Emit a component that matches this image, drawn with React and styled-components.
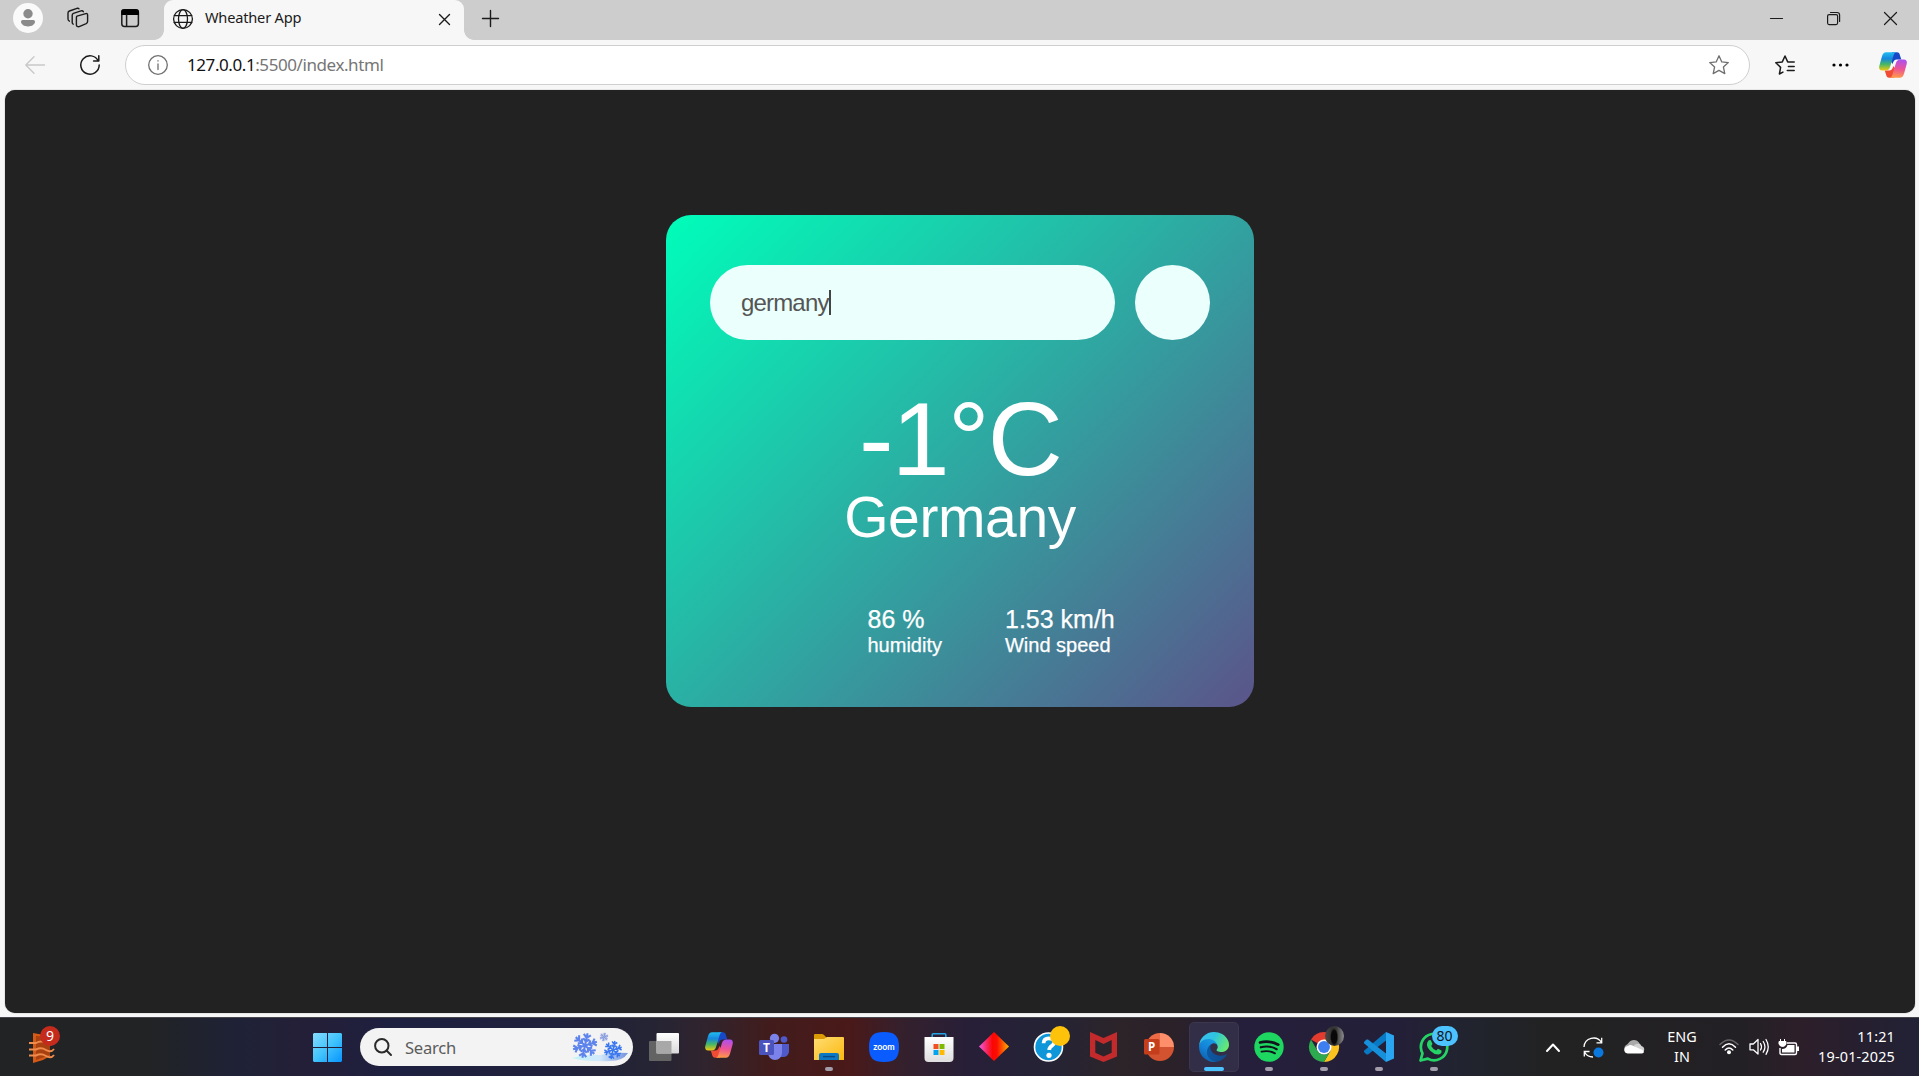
import React from "react";
import styled, { createGlobalStyle } from "styled-components";

const GlobalStyle = createGlobalStyle`
  * { box-sizing: border-box; }
  html, body { margin: 0; padding: 0; overflow: hidden; }
  svg { display: block; flex: none; overflow: visible; }
`;

const uiFont = `"Noto Sans", "Open Sans", sans-serif`;

const Screen = styled.div`
  display: flex;
  flex-direction: column;
  width: 1919px;
  height: 1076px;
  background: #f7f7f7;
  font-family: ${uiFont};
`;

/* ---------- browser chrome ---------- */

const TabStrip = styled.header`
  display: flex;
  height: 40px;
  background: #cdcdcd;
`;

const StripTools = styled.div`
  display: flex;
  align-items: center;
  width: 164px;
  height: 36px;
  padding-left: 13px;
`;

const Avatar = styled.div`
  display: flex;
  width: 30px;
  height: 30px;
  margin-right: 24px;
  border-radius: 50%;
  background: #fafafa;
`;

const StripIcon = styled.div`
  display: flex;
  margin-right: ${(p) => p.$gap || 0}px;
`;

const Tab = styled.div`
  position: relative;
  display: flex;
  align-items: center;
  width: 300px;
  height: 40px;
  padding: 0 14px 2px 9px;
  background: #f7f7f7;
  border-radius: 9px 9px 0 0;
  &::before,
  &::after {
    content: "";
    position: absolute;
    bottom: 0;
    width: 10px;
    height: 10px;
  }
  &::before {
    left: -10px;
    background: radial-gradient(circle at 0 0, #cdcdcd 9.5px, #f7f7f7 10.2px);
  }
  &::after {
    right: -10px;
    background: radial-gradient(circle at 100% 0, #cdcdcd 9.5px, #f7f7f7 10.2px);
  }
`;

const TabTitle = styled.span`
  flex: 1;
  margin-left: 12px;
  padding-bottom: 4px;
  font-size: 14.6px;
  line-height: 20px;
  letter-spacing: -0.2px;
  white-space: nowrap;
  color: #1b1b1b;
`;

const NewTab = styled.div`
  display: flex;
  align-items: center;
  height: 36px;
  margin-left: 18px;
`;

const WindowControls = styled.div`
  display: flex;
  align-items: center;
  gap: 44px;
  height: 36px;
  margin-left: auto;
  padding-right: 22px;
`;

const Toolbar = styled.div`
  display: flex;
  align-items: center;
  height: 50px;
  padding-left: 25px;
`;

const NavButton = styled.div`
  display: flex;
  margin-right: ${(p) => p.$gap || 0}px;
`;

const AddressBar = styled.div`
  display: flex;
  align-items: center;
  width: 1625px;
  height: 40px;
  padding: 0 20px 0 22px;
  background: #fff;
  border: 1px solid #cfcfcf;
  border-radius: 20px;
`;

const Url = styled.span`
  flex: 1;
  margin-left: 19px;
  padding-bottom: 1px;
  font-size: 17px;
  line-height: 24px;
  letter-spacing: -0.42px;
  color: #767676;
  b {
    font-weight: 400;
    color: #111;
  }
`;

const ToolbarActions = styled.div`
  display: flex;
  align-items: center;
  margin-left: 25px;
  svg:nth-child(2) { margin: 0 30px 0 37px; }
`;

const Viewport = styled.main`
  display: flex;
  justify-content: center;
  align-items: flex-start;
  height: 923px;
  margin: 0 4px 4px 5px;
  padding-top: 125px;
  background: #222;
  border-radius: 10px;
  box-shadow: 0 0 1px #555;
`;

/* ---------- weather card ---------- */

const Card = styled.section`
  display: flex;
  flex-direction: column;
  width: 588px;
  height: 492px;
  padding: 50px 44px;
  border-radius: 25px;
  background: linear-gradient(135deg, #00feba, #5b548a);
  color: #fff;
  font-family: "Liberation Sans", Arial, sans-serif;
  text-align: center;
`;

const SearchRow = styled.div`
  display: flex;
  justify-content: space-between;
`;

const Field = styled.div`
  display: flex;
  align-items: center;
  width: 405px;
  height: 75px;
  padding: 0 31px;
  border-radius: 38px;
  background: #ebfffc;
  color: #555;
  font-size: 24px;
  letter-spacing: -0.83px;
`;

const Caret = styled.i`
  width: 2px;
  height: 25px;
  background: #444;
`;

const RoundButton = styled.div`
  width: 75px;
  height: 75px;
  border-radius: 50%;
  background: #ebfffc;
`;

const Temperature = styled.div`
  margin-top: 43px;
  font-size: 104px;
  line-height: 113px;
  letter-spacing: -1.8px;
`;

const City = styled.div`
  margin-top: -11px;
  font-size: 57px;
  line-height: 65px;
  letter-spacing: -0.4px;
`;

const Details = styled.div`
  display: flex;
  gap: 63px;
  margin-top: 55px;
  padding-left: 157.5px;
  text-align: left;
  -webkit-text-stroke: 0.25px #fff;
`;

const Metric = styled.div`
  font-size: 20px;
  line-height: 23px;
  white-space: nowrap;
`;

const MetricValue = styled.div`
  font-size: 25px;
  line-height: 29px;
`;

/* ---------- taskbar ---------- */

const Taskbar = styled.footer`
  display: flex;
  align-items: center;
  height: 59px;
  border-top: 1px solid #46464c;
  background: linear-gradient(
    90deg,
    #212325 0, #212325 150px, #1f2237 240px, #241f38 310px, #1d2040 400px, #20213b 560px,
    #252434 650px, #30242e 705px, #421c1c 770px, #4a1919 850px, #35202c 900px, #271f38 970px,
    #252335 1050px, #2c2429 1120px, #2a2129 1175px, #251f3b 1240px, #241f38 1400px,
    #212430 1460px, #222222 1550px, #232025 1745px, #2d1f2a 1800px, #261f2f 1860px, #222236 1919px
  );
`;

const WidgetSlot = styled.div`
  position: relative;
  width: 313px;
  height: 58px;
  padding: 14px 0 0 29px;
`;

const Badge = styled.span`
  position: absolute;
  left: ${(p) => p.$x}px;
  top: ${(p) => p.$y}px;
  width: ${(p) => p.$w || 20}px;
  height: 20px;
  border-radius: 10px;
  background: ${(p) => p.$bg};
  color: ${(p) => p.$fg || "#fff"};
  font-size: ${(p) => p.$size || 14}px;
  line-height: 20px;
  text-align: center;
`;

const SearchBox = styled.div`
  display: flex;
  align-items: center;
  width: 273px;
  height: 38px;
  margin: 0 3px 0 18px;
  padding: 0 5px 0 14px;
  border-radius: 19px;
  background: #f3f3f3;
  color: #5c5c5c;
  font-size: 16.6px;
`;

const SearchLabel = styled.span`
  flex: 1;
  margin-left: 13px;
  padding-top: 1px;
  line-height: 24px;
  letter-spacing: -0.25px;
`;

const AppSlot = styled.div`
  position: relative;
  display: flex;
  justify-content: center;
  width: 55px;
  height: 50px;
  padding-top: 10px;
  &::before {
    content: "";
    position: absolute;
    z-index: 0;
    inset: 0 2.5px;
    border-radius: 5px;
    border: 1px solid ${(p) => (p.$active ? "#3c374d" : "transparent")};
    background: ${(p) => (p.$active ? "#332e47" : "transparent")};
  }
  &::after {
    content: "";
    position: absolute;
    bottom: 1px;
    left: 50%;
    transform: translateX(-50%);
    width: ${(p) => (p.$active ? 20 : p.$running ? 8 : 0)}px;
    height: 4px;
    border-radius: 2px;
    background: ${(p) => (p.$active ? "#4cc2ff" : "#a29cab")};
  }
  svg { position: relative; }
`;

const Tray = styled.div`
  display: flex;
  align-items: center;
  height: 58px;
  margin-left: auto;
  padding-right: 24px;
  color: #fff;
`;

const TrayIcon = styled.div`
  display: flex;
  margin-right: ${(p) => p.$gap}px;
`;

const TrayText = styled.div`
  width: ${(p) => p.$w}px;
  padding-bottom: 1px;
  margin-right: ${(p) => p.$gap || 0}px;
  font-size: 14.4px;
  line-height: 20px;
  letter-spacing: ${(p) => p.$track || 0}px;
  text-align: ${(p) => p.$align};
  white-space: nowrap;
`;

/* ---------- icons ---------- */

const Line = ({ w, h, d, color = "#1b1b1b", sw = 1.4, children }) => (
  <svg width={w} height={h} viewBox={`0 0 ${w} ${h}`} fill="none" stroke={color} strokeWidth={sw} strokeLinecap="round" strokeLinejoin="round">
    {d && <path d={d} />}
    {children}
  </svg>
);

const AvatarIcon = () => (
  <svg width="30" height="30" fill="#8b8b8b">
    <circle cx="15" cy="10.7" r="4.7" />
    <path d="M9.6 17H20.4Q22 17 22 18.5C22 21.5 19 23.4 15 23.4S8 21.5 8 18.5Q8 17 9.6 17Z" />
  </svg>
);

const CollectionsIcon = () => (
  <Line w={22} h={22} sw={1.4}>
    <path d="M10 9.2 18.8 6.6Q20.6 6.2 20.6 8V14.6Q20.6 16 19.2 16.7L12.2 19.6Q9.9 20.2 9.4 18V10.5Q9.4 9.5 10 9.2Z" />
    <path d="M6.2 17.2Q5.2 16.6 5.2 15.5V8.2Q5.2 7 6.4 6.4L14 3.9Q15.8 3.5 16.4 4.7" />
    <path d="M2.4 14.2Q1 13.4 1 12V6Q1 4.6 2.4 4L10 1.3Q11.4 1 12 1.8" />
  </Line>
);

const WorkspaceIcon = () => (
  <Line w={18} h={18} sw={1.5}>
    <rect x="0.8" y="0.8" width="16.6" height="16.6" rx="2.6" />
    <path d="M1 2Q1 1 3 1H15Q17.2 1 17.2 3V5.3H1Z" fill="#000" stroke="#000" />
    <path d="M5.6 6V17" />
  </Line>
);

const GlobeIcon = () => (
  <Line w={20} h={20} sw={1.3}>
    <circle cx="10" cy="10" r="9.4" />
    <ellipse cx="10" cy="10" rx="4.5" ry="9.4" />
    <path d="M1.3 6.6H18.7M1.3 13.4H18.7" />
  </Line>
);

const StarIcon = () => (
  <Line w={20} h={20} color="#707070" sw={1.3} d="M10 .8 12.8 6.9 19.3 7.6 14.4 12 15.8 18.6 10 15.4 4.2 18.6 5.6 12 .7 7.6 7.2 6.9Z" />
);

const FavoritesIcon = () => (
  <Line w={20} h={20} sw={1.5}>
    <path d="M7.9 17.1 4.4 19 5.6 12.4.8 7.8 7.3 6.9 10 1 12.7 6.9H19.2M13.4 11.4H19.2M12.3 15.4H19.2" />
  </Line>
);

const CopilotIcon = ({ size = 28, id }) => (
  <svg width={size} height={size * 0.93} viewBox="0 0 28 26">
    <defs>
      <linearGradient id={id + "a"} x1="0" y1="0" x2="0" y2="1">
        <stop offset="0" stopColor="#20bdf0" /><stop offset=".35" stopColor="#1688dc" /><stop offset=".65" stopColor="#45b767" /><stop offset="1" stopColor="#f4c90d" />
      </linearGradient>
      <linearGradient id={id + "b"} x1="0.4" y1="0" x2=".3" y2="1">
        <stop offset="0" stopColor="#ae50ee" /><stop offset=".5" stopColor="#ed5397" /><stop offset="1" stopColor="#ff9b45" />
      </linearGradient>
    </defs>
    <path d="M13 .3H17.8C20 .3 20.4 1.5 21 3.5L22.3 7.5H18C15.5 7.5 14.6 8.8 13.5 12L11 8Z" fill="#1748c7" />
    <path d="M15 25.7H10.3C8 25.7 7.5 24.2 7 22.4L5.8 18.5H10C12.5 18.5 13.3 17.2 14.5 14L17 18Z" fill="#ef4b35" />
    <path d="M7.2 .3H17.2C15.5 .8 15 2 14.4 4L11.2 14.6C10.3 17.6 9 18.6 6.3 18.6H3.4C.6 18.6-.4 16.7.3 14L3 4.3C3.8 1.5 5 .3 7.2 .3Z" fill={`url(#${id}a)`} />
    <path d="M20.8 25.7H10.8C12.5 25.2 13 24 13.6 22L16.8 11.4C17.7 8.4 19 7.4 21.7 7.4H24.6C27.4 7.4 28.4 9.3 27.7 12L25 21.7C24.2 24.5 23 25.7 20.8 25.7Z" fill={`url(#${id}b)`} />
  </svg>
);

const WidgetIcon = () => (
  <svg width="26" height="31">
    <path d="M4 1 21 4V24L14 28 4 31Z" fill="#d65a17" />
    <path d="M7 4 21 5V23L7 28Z" fill="#a8400f" />
    <path d="M0 11H7Q12 8 17 11T25 11M0 17.5H7Q12 15 17 18T25 17M0 23.5H7Q12 21 17 24T25 23" fill="none" stroke="#ef8b4c" strokeWidth="2" />
  </svg>
);

const StartIcon = () => (
  <svg width="29" height="29">
    <defs>
      <linearGradient id="start" x1="0" y1="0" x2="29" y2="29" gradientUnits="userSpaceOnUse">
        <stop stopColor="#86dcff" /><stop offset=".5" stopColor="#42c4fc" /><stop offset="1" stopColor="#0794ff" />
      </linearGradient>
    </defs>
    <path d="M1 0H14V14H0V1ZM15 0H28L29 1V14H15ZM0 15H14V29H1L0 28ZM15 15H29V28L28 29H15Z" fill="url(#start)" />
  </svg>
);

const Flake = ({ x, y, r, color }) => (
  <g transform={`translate(${x} ${y}) rotate(12) scale(${r / 12})`} stroke={color} strokeWidth="2.1" fill="none">
    {[0, 60, 120, 180, 240, 300].map((a) => (
      <path key={a} transform={`rotate(${a})`} d="M0 0V-12.5M-3.6-11.2 0-7.8 3.6-11.2M-3.2-6.8 0-4 3.2-6.8" />
    ))}
  </g>
);

const WinterIcon = () => (
  <svg width="56" height="30">
    <defs>
      <linearGradient id="snow" x1="0" x2="1"><stop stopColor="#c1f4fb" /><stop offset=".5" stopColor="#d2e8fa" /><stop offset="1" stopColor="#7292dc" /></linearGradient>
    </defs>
    <path d="M0 26Q16 22 28 23Q42 20 56 21Q51 29 38 29Q15 30 0 26Z" fill="url(#snow)" />
    <Flake x={13} y={13.5} r={12} color="#5d84ed" />
    <Flake x={32} y={5} r={4.2} color="#7d92dd" />
    <Flake x={41} y={18} r={8.8} color="#3b78f0" />
  </svg>
);

const TaskViewIcon = () => (
  <svg width="30" height="30">
    <defs><linearGradient id="tv" x1="0" y1="0" x2="0" y2="1"><stop stopColor="#fff" /><stop offset="1" stopColor="#d9d9d9" /></linearGradient></defs>
    <rect x="0" y="9" width="22.5" height="20" rx="1" fill="#636363" />
    <rect x="7.5" y="1" width="22.5" height="20.5" rx="1" fill="url(#tv)" />
    <path d="M7.5 9H22.5V21.5H7.5Z" fill="#a8a8a8" />
  </svg>
);

const TeamsIcon = () => (
  <svg width="30" height="30">
    <circle cx="25" cy="7.5" r="3.3" fill="#5059c9" />
    <path d="M20 12H30V20Q29 25 24 25H20Z" fill="#5059c9" />
    <circle cx="15.5" cy="6.3" r="4.6" fill="#7b83eb" />
    <path d="M9 12H23V21Q22 28 16 28T9 21Z" fill="#7b83eb" />
    <rect x="0" y="8" width="15" height="15" rx="1.5" fill="#4b53bc" />
    <text x="7.5" y="19.8" fill="#fff" fontFamily="Open Sans, sans-serif" fontWeight="700" fontSize="12" textAnchor="middle">T</text>
  </svg>
);

const ExplorerIcon = () => (
  <svg width="30" height="30">
    <defs><linearGradient id="folder" x1="0" y1="0" x2="1" y2="1"><stop stopColor="#ffdd73" /><stop offset="1" stopColor="#fbb90f" /></linearGradient></defs>
    <path d="M0 3Q0 2 1 2H8Q9 2 10 3L13 6V9H0Z" fill="#d99a05" />
    <path d="M0 7H10L13 5H29Q30 5 30 6V28H0Z" fill="url(#folder)" />
    <path d="M5 28V23Q5 21 7 21H23Q25 21 25 23V28Z" fill="#0c78c4" />
    <path d="M9 24.6H21" stroke="#0b4880" strokeWidth="1.4" />
  </svg>
);

const ZoomIcon = () => (
  <svg width="30" height="30">
    <path d="M15 0C26 0 30 4 30 15S26 30 15 30 0 26 0 15 4 0 15 0Z" fill="#0b5cff" />
    <text x="15" y="17.6" fill="#fff" fontFamily="Lato, sans-serif" fontWeight="700" fontSize="8.6" textLength="21.5" lengthAdjust="spacingAndGlyphs" textAnchor="middle">zoom</text>
  </svg>
);

const StoreIcon = () => (
  <svg width="30" height="30">
    <defs><linearGradient id="bag" x1="0" y1="0" x2="0" y2="1"><stop stopColor="#fff" /><stop offset="1" stopColor="#dedede" /></linearGradient></defs>
    <path d="M8.2 6V2.8Q8.2 1.8 9.2 1.8H20.8Q21.8 1.8 21.8 2.8V6" fill="none" stroke="#26a5e4" strokeWidth="1.6" />
    <path d="M.5 5H29.5V26Q29.5 30 25.5 30H4.5Q.5 30 .5 26Z" fill="url(#bag)" />
    <path d="M9.5 12H14.5V17H9.5Z" fill="#f25022" />
    <path d="M15.5 12H20.5V17H15.5Z" fill="#7fba00" />
    <path d="M9.5 18H14.5V23H9.5Z" fill="#00a4ef" />
    <path d="M15.5 18H20.5V23H15.5Z" fill="#ffb900" />
  </svg>
);

const DiamondIcon = () => (
  <svg width="30" height="30">
    <defs><linearGradient id="dia"><stop stopColor="#f05adf" /><stop offset=".45" stopColor="#fb0505" /><stop offset=".6" stopColor="#fb0f00" /><stop offset="1" stopColor="#ffb000" /></linearGradient></defs>
    <path d="M15 0 30 14.5 15 29 0 14.5Z" fill="url(#dia)" />
  </svg>
);

const HelpIcon = () => (
  <svg width="30" height="30">
    <circle cx="14.5" cy="15" r="14" fill="#0f96d8" stroke="#fff" strokeWidth="1.6" />
    <path d="M9.6 11.2C9.6 7.6 12 6.3 14.8 6.3C18.2 6.3 20.2 8 20.2 10.5C20.2 14 15.2 13.8 15.2 18" fill="none" stroke="#fff" strokeWidth="3.7" />
    <circle cx="15" cy="23.3" r="2.6" fill="#fff" />
  </svg>
);

const McAfeeIcon = () => (
  <svg width="27" height="30">
    <path d="M0 0 13.5 6 27 0V24.5L13.5 30 0 24.5ZM5.3 8V20.7L13.5 24.5 21.7 20.7V8L13.5 12Z" fill="#c22a2c" />
  </svg>
);

const PowerPointIcon = () => (
  <svg width="30" height="30">
    <path d="M16 1A14 14 0 0 0 2 15H16Z" fill="#ed6c47" />
    <path d="M16 1A14 14 0 0 1 30 15H16Z" fill="#ff8f6b" />
    <path d="M2 15A14 14 0 0 0 30 15Z" fill="#d35230" />
    <rect x="0" y="7" width="15.5" height="15.5" rx="1.5" fill="#c43e1c" />
    <text x="7.6" y="18.8" fill="#fff" fontFamily="Open Sans, sans-serif" fontWeight="700" fontSize="11.5" textAnchor="middle">P</text>
  </svg>
);

const EdgeIcon = () => (
  <svg width="30" height="30" viewBox="0 0 256 256">
    <defs>
      <linearGradient id="e1" x1="0" y1=".5" x2="1" y2=".6"><stop stopColor="#0c59a4" /><stop offset="1" stopColor="#114a8b" /></linearGradient>
      <linearGradient id="e2" x1=".7" y1="0" x2=".2" y2="1"><stop stopColor="#1b9de2" /><stop offset=".5" stopColor="#1383d8" /><stop offset="1" stopColor="#0c59a4" /></linearGradient>
      <linearGradient id="e3" x1="0" y1=".2" x2="1" y2=".6"><stop stopColor="#35c1f1" /><stop offset=".45" stopColor="#2fc3df" /><stop offset="1" stopColor="#66eb6e" /></linearGradient>
    </defs>
    <path fill="url(#e1)" d="M231 190.5c-3.4 1.8-6.9 3.4-10.5 4.7a101.7 101.7 0 0 1-36 6.4c-47.3 0-88.5-32.5-88.5-74.3a31.5 31.5 0 0 1 16.4-27.3c-42.8 1.8-53.8 46.4-53.8 72.5 0 74 68.1 81.4 82.8 81.4 7.9 0 19.8-2.3 27-4.6l1.3-.4a128.3 128.3 0 0 0 66.6-52.8 4 4 0 0 0-5.3-5.6z" />
    <path fill="url(#e2)" d="M105.7 241.4a79.2 79.2 0 0 1-22.7-21.3 80.7 80.7 0 0 1 29.5-120c3.2-1.5 8.5-4.1 15.6-4a32.4 32.4 0 0 1 25.7 13 31.9 31.9 0 0 1 6.3 18.7c0-.2 24.5-79.6-80-79.6C36.3 48.2 0 90 0 126.6a130.4 130.4 0 0 0 12.1 55.6 128 128 0 0 0 156.4 67 75.5 75.5 0 0 1-62.8-7.8z" />
    <path fill="url(#e3)" d="M152.3 148.9c-.8 1-3.3 2.5-3.3 5.7 0 2.6 1.7 5.1 4.7 7.2 14.4 10 41.5 8.7 41.6 8.7a59.6 59.6 0 0 0 30.2-8.3A61.4 61.4 0 0 0 256 109.2C256.3 86.8 248 71.9 244.7 65.3 223.4 23.8 177.7 0 128 0A128 128 0 0 0 0 126.2c.5-36.5 36.8-66 80-66 3.5 0 23.5.3 42 10a72.6 72.6 0 0 1 30.9 29.3c6.1 10.6 7.2 24.1 7.2 29.5s-2.7 13.3-7.8 19.9z" />
  </svg>
);

const SpotifyIcon = () => (
  <svg width="30" height="30">
    <circle cx="15" cy="15" r="14.7" fill="#1ed760" />
    <g fill="none" stroke="#10131b" strokeLinecap="round">
      <path d="M6 10.5Q15.5 8 24.3 12.7" strokeWidth="2.7" />
      <path d="M6.8 15.3Q15.5 13 22.7 17.2" strokeWidth="2.2" />
      <path d="M7.5 19.7Q15 18 21 21.4" strokeWidth="1.8" />
    </g>
  </svg>
);

const ChromeIcon = () => (
  <svg width="30" height="30" viewBox="0 0 48 48">
    <path d="M24 24 3.2 12A24 24 0 0 1 44.8 12Z" fill="#e33b2e" />
    <path d="M24 12H44.8A24 24 0 0 1 24 48L34.4 30Z" fill="#fcc31e" />
    <path d="M3.2 12A24 24 0 0 0 24 48L34.4 30A12 12 0 0 1 13.6 30Z" fill="#2da94f" />
    <circle cx="24" cy="24" r="12" fill="#fff" />
    <circle cx="24" cy="24" r="9.5" fill="#3d7ff0" />
  </svg>
);

const CodeIcon = () => (
  <svg width="30" height="30">
    <path d="M22 0V8.5L4 22.5 2.5 22.5 0 20 0 18.8Z" fill="#0879c4" />
    <path d="M22 30V21.5L4 7.5H2.5L0 10V11.2Z" fill="#1690db" />
    <path d="M22 0 30 3.5V26.5L22 30Z" fill="#2aa5f2" />
  </svg>
);

const WhatsAppIcon = () => (
  <svg width="30" height="30">
    <path d="M1.5 28.5 3.5 21.3A13.2 13.2 0 1 1 8.8 26.6Z" fill="none" stroke="#26d366" strokeWidth="2.7" strokeLinejoin="round" />
    <path d="M9.5 8.5Q10.8 7.5 11.8 8.3L13.4 11.8Q13.3 12.8 12.2 13.9Q14 17.2 17.2 18.6L19 16.8 22.5 18.5Q23 22 19.5 22.5Q15.5 22.8 11.5 18.9T8 12Q8 10 9.5 8.5Z" fill="#26d366" />
  </svg>
);

const ProfileBadge = styled.span`
  position: absolute;
  left: 29px;
  top: 4px;
  width: 19px;
  height: 20px;
  border-radius: 50%;
  background: radial-gradient(ellipse 4px 9px at 48% 55%, #080808 70%, transparent),
    linear-gradient(90deg, #4a4a4a, #333 35%, #3a3a3a 60%, #8d8d8d);
`;

const SyncIcon = () => (
  <svg width="21" height="21">
    <g fill="none" stroke="#fff" strokeWidth="1.3">
      <path d="M1 10A9.5 9.5 0 0 1 18.5 5.5M18.7 .8V5.8H13.5M1.3 19.5V14.5H6.5M1.5 15A9.5 9.5 0 0 0 10 20" />
    </g>
    <circle cx="15.5" cy="15.5" r="5" fill="#0a78dc" />
  </svg>
);

const CloudIcon = () => (
  <svg width="21" height="14">
    <path d="M3 12A4 4 0 0 1 2 5C4 5 5 0 10 0C14 0 15 3 16 4L6 12Z" fill="#aaa" />
    <path d="M10 5Q16 2 17.5 6Q21 7 20 11L12 10Z" fill="#d2d2d2" />
    <path d="M3.5 13.5Q.5 13 .2 10Q.5 6.5 4 6Q6 4.3 9 5.8L18.5 10Q20.5 11 19.8 12.5Q19 13.5 17.5 13.5Z" fill="#fff" />
  </svg>
);

const WifiIcon = () => (
  <svg width="20" height="16">
    <g fill="none" strokeLinecap="round" strokeWidth="1.5">
      <path d="M1 5.5Q10-3.5 19 5.5" stroke="#686568" />
      <path d="M3.5 8.2Q10 1.5 16.5 8.2M6.2 11Q10 7 13.8 11" stroke="#fff" />
    </g>
    <circle cx="10" cy="13.3" r="2" fill="#fff" />
  </svg>
);

const SoundIcon = () => (
  <Line w={20} h={18} color="#fff" sw={1.3} d="M1 6H4.3L9 1.5V16L4.3 11.8H1ZM11.5 5.5Q13.5 8.8 11.5 12M14.2 3.5Q17.7 8.8 14.2 14.2M17 1.5Q21.5 8.8 17 16.3" />
);

const BatteryIcon = () => (
  <svg width="20" height="17">
    <path d="M8 4H16Q17.5 4 17.5 5.5V14Q17.5 15.5 16 15.5H2.5Q1 15.5 1 14V9" fill="none" stroke="#fff" strokeWidth="1.4" />
    <path d="M8.5 6H15.5V13.5H3V10Q7.5 10 8.5 6ZM18 7.5H20V12H18Z" fill="#fff" />
    <path d="M1.5 0V2.5M5.5 0V2.5M0 2.5H7V5Q6 7.5 3.5 7.5T0 5Z" fill="#fff" stroke="#fff" strokeWidth="1" />
  </svg>
);

const apps = [
  { name: "taskview", icon: <TaskViewIcon /> },
  { name: "copilot", icon: <CopilotIcon id="task" /> },
  { name: "teams", icon: <TeamsIcon /> },
  { name: "explorer", icon: <ExplorerIcon />, running: true },
  { name: "zoom", icon: <ZoomIcon /> },
  { name: "store", icon: <StoreIcon /> },
  { name: "diamond", icon: <DiamondIcon /> },
  { name: "help", icon: <HelpIcon />, badge: <Badge $x={29} $y={4} $bg="#ffc20a" /> },
  { name: "mcafee", icon: <McAfeeIcon /> },
  { name: "powerpoint", icon: <PowerPointIcon /> },
  { name: "edge", icon: <EdgeIcon />, active: true },
  { name: "spotify", icon: <SpotifyIcon />, running: true },
  { name: "chrome", icon: <ChromeIcon />, running: true, badge: <ProfileBadge /> },
  { name: "code", icon: <CodeIcon />, running: true },
  { name: "whatsapp", icon: <WhatsAppIcon />, running: true, badge: <Badge $x={25.5} $y={4} $w={26} $bg="#4cc2ff" $fg="#10151a">80</Badge> },
];

const Browser = () => (
  <>
    <TabStrip>
      <StripTools>
        <Avatar><AvatarIcon /></Avatar>
        <StripIcon $gap={32}><CollectionsIcon /></StripIcon>
        <StripIcon><WorkspaceIcon /></StripIcon>
      </StripTools>
      <Tab>
        <GlobeIcon />
        <TabTitle>Wheather App</TabTitle>
        <Line w={11} h={11} d="M.5 .5 10.5 10.5M10.5 .5 .5 10.5" />
      </Tab>
      <NewTab><Line w={17} h={17} d="M8.5 .5V16.5M.5 8.5H16.5" /></NewTab>
      <WindowControls>
        <Line w={13} h={13} sw={1.2} d="M.5 6.5H12.5" />
        <Line w={13} h={13} sw={1.2}>
          <rect x=".6" y="2.6" width="10" height="10" rx="1.5" />
          <path d="M3.5 .5H10Q12.6 .5 12.6 3V9.5" />
        </Line>
        <Line w={13} h={13} sw={1.2} d="M.5 .5 12.5 12.5M12.5 .5 .5 12.5" />
      </WindowControls>
    </TabStrip>
    <Toolbar>
      <NavButton $gap={35}><Line w={20} h={18} color="#c9c9c9" d="M19.5 9H.8M9 .8.8 9 9 17.2" /></NavButton>
      <NavButton $gap={25}>
        <Line w={20} h={20} sw={1.5} d="M18.3 6A9.2 9.2 0 1 0 19.2 10M18.8 .8V6H13.6" />
      </NavButton>
      <AddressBar>
        <Line w={20} h={20} color="#6f6f6f" sw={1.3}>
          <circle cx="10" cy="10" r="9.3" />
          <path d="M10 9V14.5M10 5.7V6" />
        </Line>
        <Url><b>127.0.0.1</b>:5500/index.html</Url>
        <StarIcon />
      </AddressBar>
      <ToolbarActions>
        <FavoritesIcon />
        <svg width="17" height="4"><circle cx="2" cy="2" r="1.6" /><circle cx="8.5" cy="2" r="1.6" /><circle cx="15" cy="2" r="1.6" /></svg>
        <CopilotIcon id="bar" />
      </ToolbarActions>
    </Toolbar>
  </>
);

const Weather = () => (
  <Card>
    <SearchRow>
      <Field>germany<Caret /></Field>
      <RoundButton />
    </SearchRow>
    <Temperature>-1°C</Temperature>
    <City>Germany</City>
    <Details>
      <Metric><MetricValue>86 %</MetricValue>humidity</Metric>
      <Metric><MetricValue>1.53 km/h</MetricValue>Wind speed</Metric>
    </Details>
  </Card>
);

export default function App() {
  return (
    <Screen>
      <GlobalStyle />
      <Browser />
      <Viewport><Weather /></Viewport>
      <Taskbar>
        <WidgetSlot>
          <WidgetIcon />
          <Badge $x={40} $y={8} $bg="#c42b1c">9</Badge>
        </WidgetSlot>
        <StartIcon />
        <SearchBox>
          <Line w={18} h={18} sw={2} color="#2a2a2a" d="M12.5 12.5 17 17"><circle cx="7.8" cy="7.8" r="6.7" /></Line>
          <SearchLabel>Search</SearchLabel>
          <WinterIcon />
        </SearchBox>
        {apps.map((a) => (
          <AppSlot key={a.name} $active={a.active} $running={a.running}>
            {a.icon}
            {a.badge}
          </AppSlot>
        ))}
        <Tray>
          <TrayIcon $gap={23}><Line w={14} h={9} color="#fff" sw={2} d="M1 8 7 1.5 13 8" /></TrayIcon>
          <TrayIcon $gap={20}><SyncIcon /></TrayIcon>
          <TrayIcon $gap={21}><CloudIcon /></TrayIcon>
          <TrayText $w={32} $align="center" $gap={21}>ENG<br />IN</TrayText>
          <TrayIcon $gap={10}><WifiIcon /></TrayIcon>
          <TrayIcon $gap={10}><SoundIcon /></TrayIcon>
          <TrayIcon $gap={16}><BatteryIcon /></TrayIcon>
          <TrayText $w={80} $align="right" $track={0.18}>11:21<br />19-01-2025</TrayText>
        </Tray>
      </Taskbar>
    </Screen>
  );
}
